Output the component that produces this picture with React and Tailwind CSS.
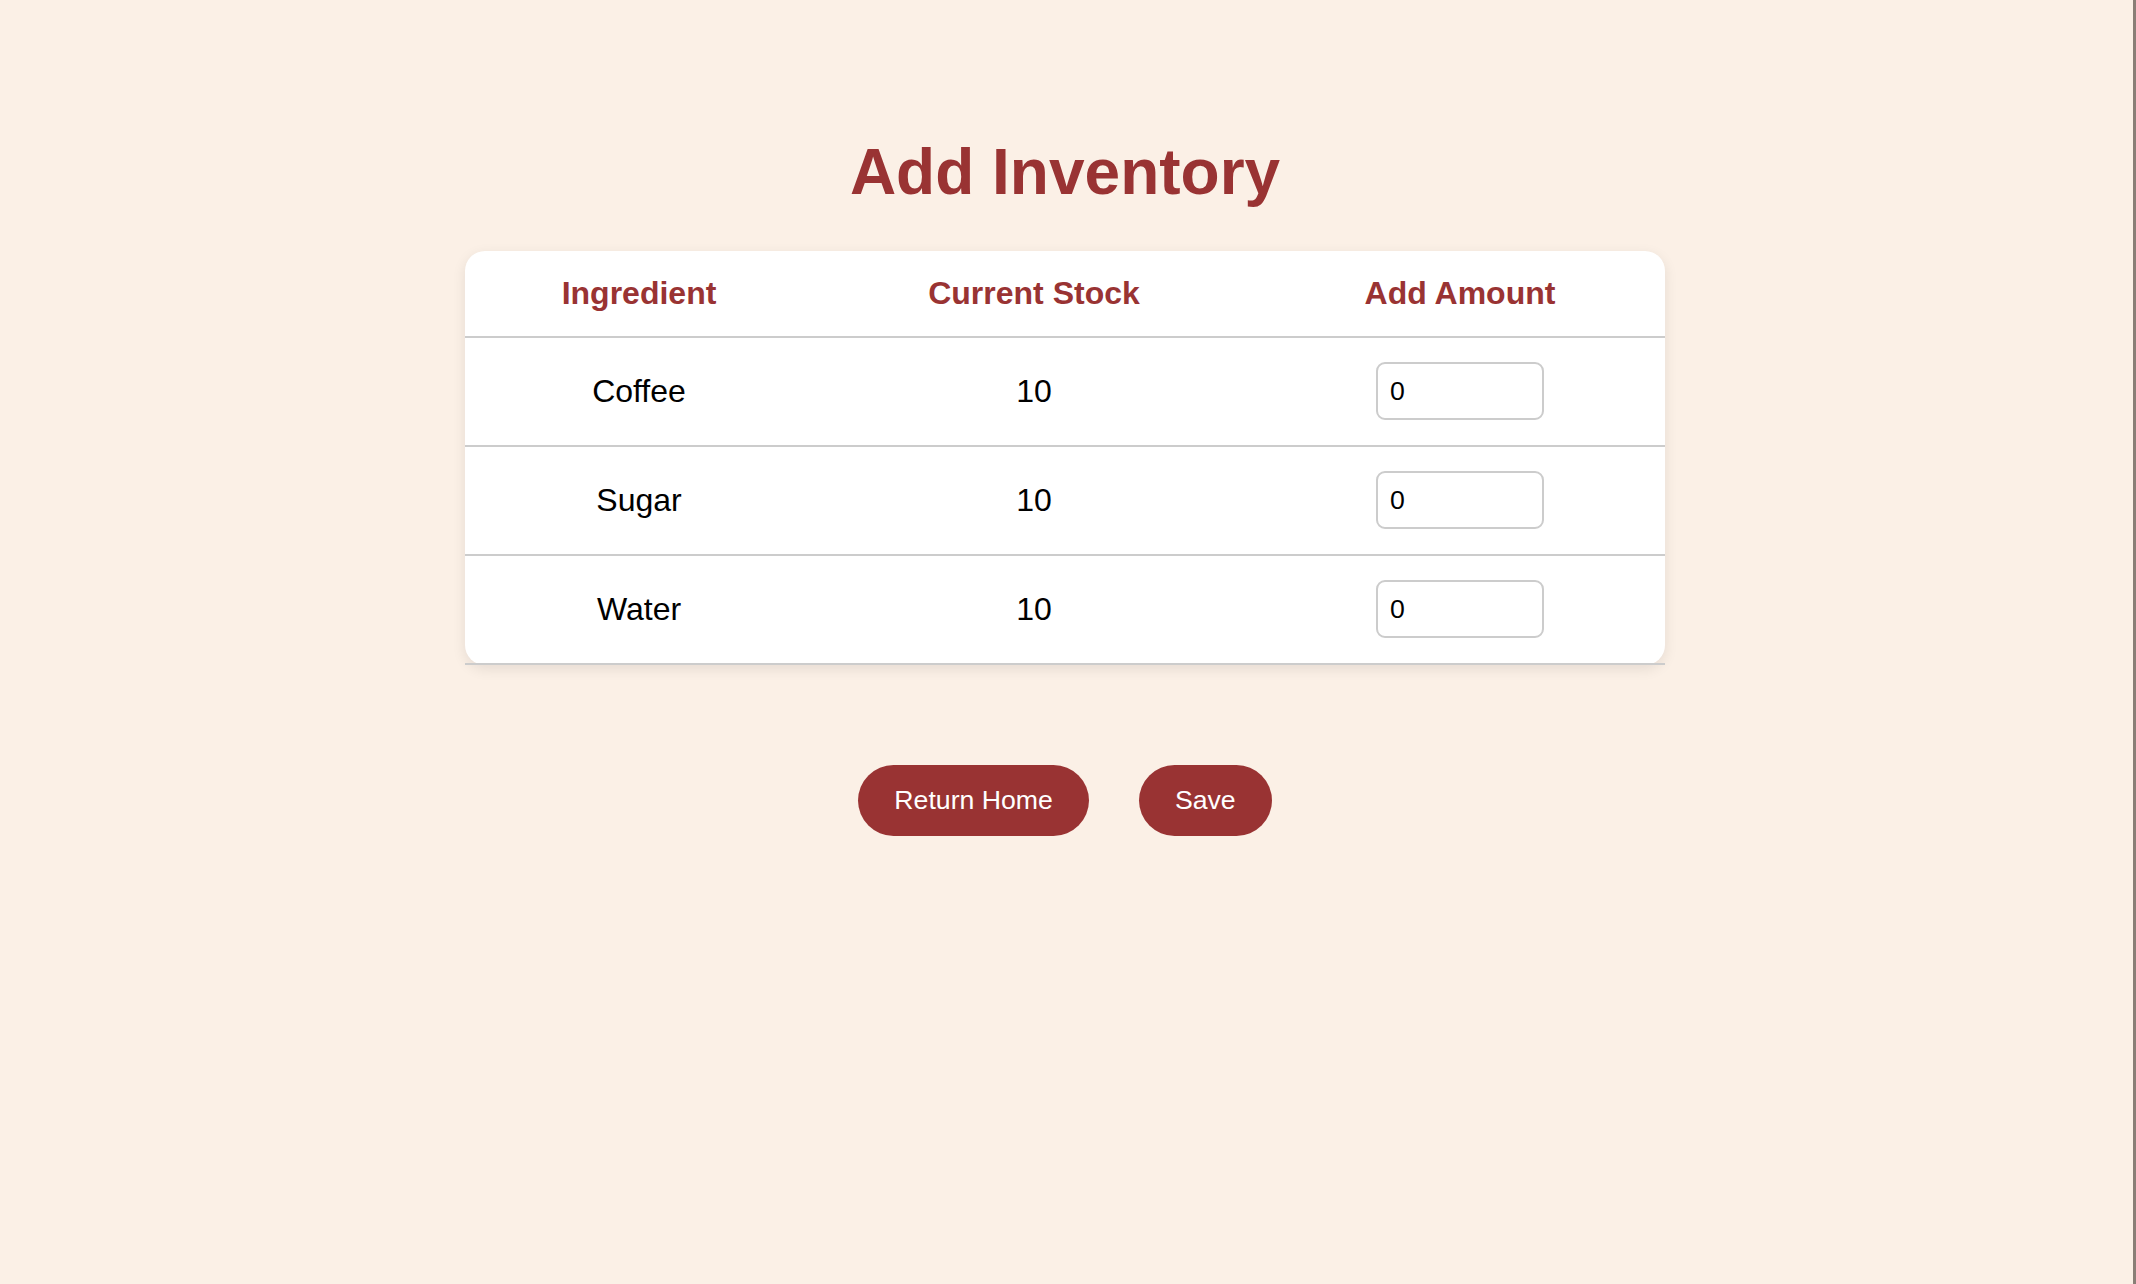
import { useState } from "react";

const rows = [
  { name: "Coffee", stock: 10 },
  { name: "Sugar", stock: 10 },
  { name: "Water", stock: 10 },
];

export default function App() {
  const [amounts, setAmounts] = useState(rows.map(() => "0"));

  const updateAmount = (i, value) => {
    const next = [...amounts];
    next[i] = value;
    setAmounts(next);
  };

  return (
    <div className="min-h-screen w-full bg-[#fbf0e6] border-r-[3px] border-[#8a7e76] font-['Liberation_Sans',Arial,sans-serif]">
      <div className="flex flex-col items-center pt-[136px] pr-[3px]">
        {/* Title */}
        <h1 className="text-[64px] leading-[1.15] font-bold text-[#993333] mb-[41px]">
          Add Inventory
        </h1>

        {/* Inventory card */}
        <div className="w-[1200px] bg-white rounded-[20px] shadow-[0_4px_14px_rgba(0,0,0,0.09)]">
          <div className="grid grid-cols-[348px_442px_410px] border-b-2 border-[#cccccc] text-[32px] font-bold text-[#993333] leading-[37px]">
            <div className="py-6 text-center">Ingredient</div>
            <div className="py-6 text-center">Current Stock</div>
            <div className="py-6 text-center">Add Amount</div>
          </div>

          {rows.map((row, i) => (
            <div
              key={row.name}
              className="grid grid-cols-[348px_442px_410px] items-center h-[109px] border-b-2 border-[#cccccc] text-[32px] text-black"
            >
              <div className="text-center">{row.name}</div>
              <div className="text-center">{row.stock}</div>
              <div className="flex justify-center">
                <input
                  type="number"
                  value={amounts[i]}
                  onChange={(e) => updateAmount(i, e.target.value)}
                  className="w-[168px] h-[58px] px-3 text-[26.67px] text-black bg-white border-2 border-[#cccccc] rounded-[9px] outline-none [appearance:textfield] [&::-webkit-inner-spin-button]:appearance-none"
                />
              </div>
            </div>
          ))}
        </div>

        {/* Actions */}
        <div className="flex gap-[50px] mt-[100px]">
          <button className="h-[71px] px-9 rounded-full bg-[#993333] text-white text-[26.67px]">
            Return Home
          </button>
          <button className="h-[71px] px-9 rounded-full bg-[#993333] text-white text-[26.67px]">
            Save
          </button>
        </div>
      </div>
    </div>
  );
}
